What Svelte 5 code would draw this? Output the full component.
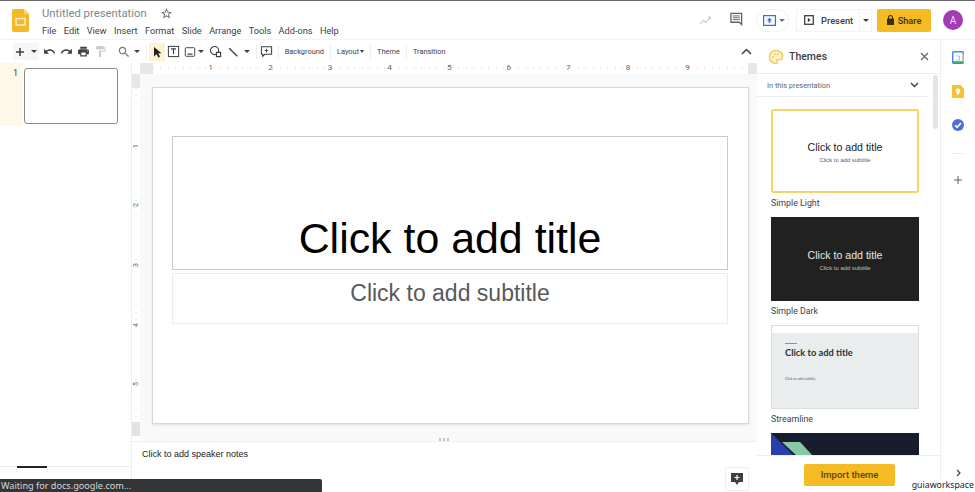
<script>
  const menus = ['File', 'Edit', 'View', 'Insert', 'Format', 'Slide', 'Arrange', 'Tools', 'Add-ons', 'Help'];
  const inches = [1, 2, 3, 4, 5, 6, 7, 8, 9];
  const sideInches = [1, 2, 3, 4, 5];
</script>

<div class="app">
  <header class="topbar">
    <svg class="logo" width="17" height="23" viewBox="0 0 17 23">
      <path d="M2 0h10l5 5v16a2 2 0 0 1-2 2H2a2 2 0 0 1-2-2V2a2 2 0 0 1 2-2z" fill="#f4b92a" />
      <path d="M12 0l5 5h-5z" fill="#f8d775" />
      <rect x="4" y="9.500" width="9" height="6.500" fill="none" stroke="#fff3c4" stroke-width="1.400" />
    </svg>
    <div class="doc">
      <div class="title-row">
        <span class="doc-title">Untitled presentation</span>
        <svg class="star" width="13" height="13" viewBox="0 0 24 24"><path d="M22 9.240l-7.190-.62L12 2 9.190 8.630 2 9.240l5.460 4.730L5.820 21 12 17.270 18.180 21l-1.630-7.030L22 9.240zM12 15.400l-3.760 2.270 1-4.280-3.320-2.880 4.380-.38L12 6.100l1.710 4.040 4.380.38-3.320 2.880 1 4.280L12 15.400z" fill="#5f6368" /></svg>
      </div>
      <nav class="menu">
        {#each menus as item}
          <span>{item}</span>
        {/each}
      </nav>
    </div>
    <div class="actions">
      <svg class="trend" width="13" height="11" viewBox="0 0 15 12"><path d="M1 10l4-4 3 2 5-6M10 2h3v3" fill="none" stroke="#c4c7c9" stroke-width="1.200" /></svg>
      <svg class="comments" width="13" height="14" viewBox="0 0 14 14"><path d="M1 1h11.500v12l-2.500-2.500H1z" fill="none" stroke="#5f6368" stroke-width="1.400" /><path d="M3 3.700h7.500M3 5.700h7.500M3 7.700h7.500" stroke="#5f6368" stroke-width="1" /></svg>
      <div class="meet">
        <svg width="13" height="11" viewBox="0 0 13 11"><rect x=".6" y=".6" width="11.800" height="9.800" fill="#f4f8ff" stroke="#3f72c5" stroke-width="1.200" /><path d="M6.500 2.800L9 5.500H7.400v2.300H5.600V5.500H4z" fill="#3f72c5" /></svg>
        <span class="caret blue"></span>
      </div>
      <div class="present">
        <span class="present-main">
          <svg width="10" height="10" viewBox="0 0 10 10"><rect x=".7" y=".7" width="8.600" height="8.600" fill="none" stroke="#3c4043" stroke-width="1.300" /><path d="M3.800 2.800L6.600 5 3.800 7.200z" fill="#3c4043" /></svg>
          Present
        </span>
        <span class="present-more"><span class="caret dark"></span></span>
      </div>
      <button class="share">
        <svg width="7" height="10" viewBox="0 0 7 10"><path d="M1 3.500V2.500a2.500 2.500 0 0 1 5 0v1h1V10H0V3.500zM2 3.500h3v-1a1.500 1.500 0 0 0-3 0z" fill="#3c3006" /></svg>
        Share
      </button>
      <div class="avatar">A</div>
    </div>
  </header>

  <div class="body">
    <div class="main">
      <div class="toolbar">
        <span class="new-group">
          <svg width="10" height="10" viewBox="0 0 10 10"><path d="M5 1v8M1 5h8" stroke="#3c4043" stroke-width="1.500" /></svg>
          <span class="caret dark"></span>
        </span>
        <svg class="ic" viewBox="0 0 24 24"><path d="M12.500 8c-2.650 0-5.050.99-6.900 2.600L2 7v9h9l-3.620-3.620c1.390-1.160 3.160-1.880 5.120-1.880 3.540 0 6.550 2.310 7.600 5.500l2.370-.78C21.080 11.030 17.150 8 12.500 8z" /></svg>
        <svg class="ic" viewBox="0 0 24 24"><path d="M18.400 10.600C16.550 8.990 14.150 8 11.500 8c-4.650 0-8.580 3.030-9.960 7.220L3.900 16c1.050-3.190 4.050-5.500 7.600-5.500 1.950 0 3.730.72 5.120 1.880L13 16h9V7l-3.600 3.600z" /></svg>
        <svg class="ic" viewBox="0 0 24 24"><path d="M19 8H5c-1.660 0-3 1.340-3 3v6h4v4h12v-4h4v-6c0-1.660-1.340-3-3-3zm-3 11H8v-5h8v5zm3-7c-.55 0-1-.45-1-1s.45-1 1-1 1 .45 1 1-.45 1-1 1zm-1-9H6v4h12V3z" /></svg>
        <svg class="ic faint" viewBox="0 0 24 24"><path d="M18 4V3c0-.55-.45-1-1-1H5c-.55 0-1 .45-1 1v4c0 .55.45 1 1 1h12c.55 0 1-.45 1-1V6h1v4H9v11c0 .55.45 1 1 1h2c.55 0 1-.45 1-1v-9h8V4h-3z" /></svg>
        <svg class="ic zoom" viewBox="0 0 24 24"><path d="M15.500 14h-.79l-.28-.27C15.410 12.590 16 11.110 16 9.500 16 5.910 13.090 3 9.500 3S3 5.910 3 9.500 5.910 16 9.500 16c1.610 0 3.090-.59 4.230-1.570l.27.28v.79l5 4.990L20.490 19l-4.990-5zm-6 0C7.010 14 5 11.990 5 9.500S7.010 5 9.500 5 14 7.010 14 9.500 11.990 14 9.500 14z" /></svg>
        <span class="caret dark zoom-caret"></span>
        <span class="sep"></span>
        <span class="cursor-btn">
          <svg width="12" height="12" viewBox="0 0 24 24"><path d="M6 2v19l5-5 3.500 7 3.500-1.700L14.500 14.500H21z" fill="#202124" /></svg>
        </span>
        <svg class="ic textbox" viewBox="0 0 14 14"><rect x="1.500" y="1.500" width="11" height="11" fill="none" stroke="#3c4043" stroke-width="1.100" /><path d="M4.300 4.200h5.400M7 4.200v5.800" fill="none" stroke="#3c4043" stroke-width="1.200" /></svg>
        <svg class="ic image" viewBox="0 0 14 14"><rect x="1.500" y="2" width="11" height="10" rx="1" fill="none" stroke="#3c4043" stroke-width="1.100" /><path d="M4 9.500h6" stroke="#3c4043" stroke-width="1.400" /></svg>
        <span class="caret dark image-caret"></span>
        <svg class="ic shape" viewBox="0 0 14 14"><circle cx="6" cy="6" r="4.400" fill="none" stroke="#3c4043" stroke-width="1.200" /><path d="M8 8h4.500v4.500H8z" fill="#fff" stroke="#3c4043" stroke-width="1.200" /></svg>
        <svg class="ic line" viewBox="0 0 14 14"><path d="M2.500 2.500l9.500 9.500" stroke="#3c4043" stroke-width="1.600" /></svg>
        <span class="caret dark line-caret"></span>
        <span class="sep"></span>
        <svg class="ic comment-add" viewBox="0 0 14 14"><path d="M1.500 2h11v8H5l-2 2.200V10H1.500z" fill="none" stroke="#3c4043" stroke-width="1.100" /><path d="M7 4v4M5 6h4" stroke="#3c4043" stroke-width="1" /></svg>
        <span class="sep wide"></span>
        <span class="tb-text">Background</span>
        <span class="sep wide"></span>
        <span class="tb-text">Layout<span class="caret dark small"></span></span>
        <span class="sep wide"></span>
        <span class="tb-text">Theme</span>
        <span class="sep wide"></span>
        <span class="tb-text">Transition</span>
        <svg class="collapse" width="11" height="7" viewBox="0 0 11 7"><path d="M1 6l4.500-4.500L10 6" fill="none" stroke="#3c4043" stroke-width="1.500" /></svg>
      </div>

      <div class="workspace">
        <aside class="film">
          <div class="film-row">
            <span class="slide-no">1</span>
            <div class="thumb"></div>
          </div>
          <div class="film-foot"><span class="foot-tab"></span></div>
        </aside>

        <div class="editor">
          <div class="h-ruler">
            <span class="corner"></span>
            <div class="h-track">
              {#each inches as n}
                <span>{n}</span>
              {/each}
            </div>
            <span class="h-end"></span>
          </div>
          <div class="canvas-row">
            <div class="v-ruler">
              <span class="v-top"></span>
              <div class="v-track">
                {#each sideInches as n}
                  <span><i>{n}</i></span>
                {/each}
              </div>
              <span class="v-bottom"></span>
            </div>
            <div class="canvas">
              <div class="slide">
                <div class="ph-title">Click to add title</div>
                <div class="ph-sub">Click to add subtitle</div>
              </div>
            </div>
          </div>
          <div class="notes">
            <span class="grip"></span>
            <p>Click to add speaker notes</p>
            <span class="explore">
              <svg width="12" height="12" viewBox="0 0 12 12"><path d="M0 0h12v9H8l-2 3-2-3H0z" fill="#3c4043" /><path d="M6 2v5M3.500 4.500h5" stroke="#fff" stroke-width="1.200" /></svg>
            </span>
          </div>
        </div>
      </div>
    </div>

    <aside class="themes">
      <div class="themes-head">
        <svg class="palette" width="16" height="16" viewBox="0 0 24 24"><path d="M12 2C6.500 2 2 6.500 2 12s4.500 10 10 10c1 0 1.800-.8 1.800-1.800 0-.5-.2-.9-.5-1.200-.3-.3-.5-.7-.5-1.200 0-1 .8-1.800 1.800-1.800H16.700c3 0 5.300-2.400 5.300-5.300C22 5.900 17.500 2 12 2z" fill="#fdf1c7" stroke="#f2c94c" stroke-width="2" /><circle cx="7" cy="12" r="1.500" fill="#f2c94c" /><circle cx="10" cy="7.500" r="1.500" fill="#f2c94c" /><circle cx="15" cy="7.500" r="1.500" fill="#f2c94c" /></svg>
        <span class="themes-title">Themes</span>
        <svg class="close" width="9" height="9" viewBox="0 0 9 9"><path d="M1 1l7 7M8 1L1 8" stroke="#5f6368" stroke-width="1.200" /></svg>
      </div>
      <div class="filter">
        <span>In this presentation</span>
        <svg width="9" height="6" viewBox="0 0 9 6"><path d="M1 1l3.500 3.500L8 1" fill="none" stroke="#3c4043" stroke-width="1.400" /></svg>
      </div>
      <span class="scroll"></span>
      <div class="theme-list">
        <div class="preview light selected">
          <b>Click to add title</b>
          <small>Click to add subtitle</small>
        </div>
        <div class="theme-name">Simple Light</div>
        <div class="preview dark-theme">
          <b>Click to add title</b>
          <small>Click to add subtitle</small>
        </div>
        <div class="theme-name">Simple Dark</div>
        <div class="preview streamline">
          <div class="stream-inner">
            <span class="dash"></span>
            <b>Click to add title</b>
            <small>Click to add subtitle</small>
          </div>
        </div>
        <div class="theme-name">Streamline</div>
        <div class="preview focus">
          <svg width="148" height="24" viewBox="0 0 148 24"><path d="M0 0l24 24H0z" fill="#2a3fae" /><path d="M11 9h18l14 15H27z" fill="#86c9a6" /></svg>
        </div>
      </div>
      <div class="themes-foot">
        <button class="import">Import theme</button>
      </div>
    </aside>

    <aside class="rail">
      <svg class="addon" width="12" height="13" viewBox="0 0 12 13"><rect x=".7" y=".7" width="10.600" height="11.600" rx="1" fill="#fff" stroke="#4285f4" stroke-width="1.400" /><path d="M.7 11h10.600" stroke="#34a853" stroke-width="1.600" /><path d="M11.300 3v8" stroke="#fbbc04" stroke-width="1.400" /><path d="M4.500 5h3v4h-3" fill="none" stroke="#8ab4f8" stroke-width=".8" /></svg>
      <svg class="addon keep" width="12" height="13" viewBox="0 0 12 13"><path d="M1 0h7.500L12 3.500V12a1 1 0 0 1-1 1H1a1 1 0 0 1-1-1V1a1 1 0 0 1 1-1z" fill="#fbc02d" /><circle cx="6" cy="6" r="2.400" fill="#fff" /><rect x="5" y="8" width="2" height="1.700" fill="#fff" /></svg>
      <svg class="addon tasks" width="12" height="12" viewBox="0 0 12 12"><circle cx="6" cy="6" r="6" fill="#4c6fd1" /><path d="M3 6.200l2.100 2.100L9 4" fill="none" stroke="#fff" stroke-width="1.500" /></svg>
      <span class="rail-sep"></span>
      <svg class="plus" width="8" height="8" viewBox="0 0 8 8"><path d="M4 0v8M0 4h8" stroke="#5f6368" stroke-width="1" /></svg>
      <svg class="expand" width="5" height="8" viewBox="0 0 5 8"><path d="M1 1l3 3-3 3" fill="none" stroke="#3c4043" stroke-width="1.200" /></svg>
    </aside>
  </div>

  <div class="status">Waiting for docs.google.com...</div>
  <div class="watermark">guiaworkspace</div>
</div>

<style>
  :global(body) {
    margin: 0;
    background: #fff;
  }

  .app {
    position: relative;
    width: 975px;
    height: 492px;
    overflow: hidden;
    display: flex;
    flex-direction: column;
    border-top: 1px solid #6a6a6a;
    box-sizing: border-box;
    font-family: Roboto, sans-serif;
    color: #3c4043;
    background: #fff;
  }

  .caret {
    display: inline-block;
    width: 0;
    height: 0;
    border-left: 3px solid transparent;
    border-right: 3px solid transparent;
    border-top: 3px solid #3c4043;
  }

  .caret.blue {
    border-top-color: #4a76c9;
  }

  .caret.small {
    border-left-width: 2.500px;
    border-right-width: 2.500px;
    margin-left: 1px;
    vertical-align: 1px;
  }

  /* top bar */
  .topbar {
    height: 38px;
    flex-shrink: 0;
    display: flex;
    align-items: flex-start;
  }

  .logo {
    margin: 8px 0 0 12px;
  }

  .doc {
    margin-left: 13px;
    padding-top: 5px;
  }

  .title-row {
    display: flex;
    align-items: center;
    height: 15px;
  }

  .doc-title {
    width: 118px;
    font-size: 11.300px;
    color: #80868b;
  }

  .menu {
    display: flex;
    gap: 7.400px;
    font-size: 9.200px;
    margin-top: 3px;
    line-height: 14px;
    color: #3c4043;
  }

  .actions {
    margin-left: auto;
    display: flex;
    align-items: center;
    height: 38px;
    padding-right: 12px;
  }

  .comments {
    margin-left: 18px;
    margin-top: -2px;
  }

  .meet {
    margin-left: 13px;
    width: 33px;
    height: 23px;
    border: 1px solid #f1f3f4;
    border-radius: 11px;
    display: flex;
    align-items: center;
    gap: 3px;
    padding-left: 6px;
    box-sizing: border-box;
  }

  .present {
    margin-left: 7px;
    height: 23px;
    width: 76px;
    display: flex;
    border: 1px solid #f1f3f4;
    box-sizing: border-box;
  }

  .present-main {
    flex: 1;
    display: flex;
    align-items: center;
    gap: 7px;
    padding-left: 7px;
    font-size: 9.300px;
    font-weight: 500;
  }

  .present-more {
    width: 11px;
    border-left: 1px solid #f1f3f4;
    display: flex;
    align-items: center;
    justify-content: center;
  }

  .share {
    margin-left: 5px;
    width: 54px;
    height: 23px;
    border: none;
    border-radius: 2px;
    background: #f5bb24;
    color: #3c3006;
    font: 500 9.200px Roboto, sans-serif;
    display: flex;
    align-items: center;
    justify-content: center;
    gap: 4px;
    padding: 0;
  }

  .avatar {
    margin-left: 12px;
    width: 20px;
    height: 20px;
    border-radius: 50%;
    background: #a33bb5;
    color: #f3d9f7;
    font-size: 10px;
    display: flex;
    align-items: center;
    justify-content: center;
  }

  .body {
    flex: 1;
    display: flex;
    min-height: 0;
    border-top: 1px solid #f1f3f4;
  }

  .main {
    width: 757px;
    display: flex;
    flex-direction: column;
    flex-shrink: 0;
  }

  /* toolbar */
  .toolbar {
    height: 23px;
    flex-shrink: 0;
    display: flex;
    align-items: center;
    padding-left: 13px;
  }

  .new-group {
    width: 26px;
    height: 17px;
    background: #f5f6f7;
    display: flex;
    align-items: center;
    gap: 6px;
    padding-left: 2px;
    box-sizing: border-box;
    margin-right: 3.500px;
    flex-shrink: 0;
  }

  .ic {
    width: 13px;
    height: 13px;
    margin-right: 4.300px;
    fill: #3c4043;
    flex-shrink: 0;
  }

  .ic.faint {
    fill: #c9cccf;
  }

  .ic.zoom {
    width: 14px;
    height: 14px;
    margin-left: 5px;
    margin-right: 3px;
    fill: #70757a;
  }

  .zoom-caret {
    margin-right: 1px;
  }

  .sep {
    width: 1px;
    height: 14px;
    background: #eceef0;
    margin: 0 5px;
    flex-shrink: 0;
  }

  .sep.wide {
    margin: 0 6px;
  }

  .cursor-btn {
    width: 16px;
    height: 18px;
    background: #fdf3d3;
    display: flex;
    align-items: center;
    justify-content: center;
    margin-left: -3px;
    margin-right: 2px;
  }

  .ic.textbox {
    margin-right: 3px;
  }

  .ic.image {
    width: 12px;
    height: 12px;
    margin-left: 1px;
    margin-right: 2px;
  }

  .image-caret {
    margin-right: 4px;
  }

  .ic.shape {
    margin-left: 1px;
    margin-right: 5px;
  }

  .ic.line {
    width: 12px;
    height: 12px;
    margin-right: 5px;
  }

  .line-caret {
    margin-right: 1px;
  }

  .ic.comment-add {
    margin: 0 -1px 0 -2px;
  }

  .tb-text {
    color: #3c4043;
    font-size: 7.400px;
    white-space: nowrap;
    opacity: 0.99;
  }

  .collapse {
    margin-left: auto;
    margin-right: 5px;
  }

  /* filmstrip + editor */
  .workspace {
    flex: 1;
    display: flex;
    min-height: 0;
  }

  .film {
    width: 132px;
    flex-shrink: 0;
    display: flex;
    flex-direction: column;
    border-right: 1px solid #eceef0;
    box-sizing: border-box;
  }

  .film-row {
    height: 63px;
    display: flex;
    padding-top: 5px;
    background: linear-gradient(90deg, #fdf8e8 0, #fdf8e8 22px, #fff 23px);
    box-sizing: border-box;
  }

  .slide-no {
    width: 24px;
    padding-left: 13px;
    box-sizing: border-box;
    font-size: 9px;
    color: #3c4043;
  }

  .thumb {
    width: 94px;
    height: 56px;
    border: 1px solid #8c8c84;
    border-radius: 3px;
    box-sizing: border-box;
    background: #fff;
  }

  .film-foot {
    margin-top: auto;
    height: 25px;
    border-top: 1px solid #eceef0;
  }

  .foot-tab {
    display: block;
    width: 30px;
    height: 2px;
    margin-left: 17px;
    margin-top: -1px;
    background: #202124;
  }

  .editor {
    flex: 1;
    display: flex;
    flex-direction: column;
    min-width: 0;
  }

  .h-ruler {
    height: 11px;
    display: flex;
    flex-shrink: 0;
    background: #fff;
  }

  .corner {
    width: 21px;
    background: linear-gradient(90deg, #fff 8px, #e6e7e8 8px);
  }

  .h-track {
    width: 595px;
    padding-left: 28px;
    box-sizing: border-box;
    display: flex;
    font-size: 8px;
    line-height: 10px;
    color: #5f6368;
    background: repeating-linear-gradient(90deg, #e6e7e9 0, #e6e7e9 1px, transparent 1px, transparent 7.450px) 0 4px / 100% 2px no-repeat;
  }

  .h-track span {
    width: 59.600px;
    text-align: center;
  }

  .h-end {
    flex: 1;
    background: #e6e7e8;
  }

  .canvas-row {
    flex: 1;
    display: flex;
    min-height: 0;
  }

  .v-ruler {
    width: 8px;
    display: flex;
    flex-direction: column;
    flex-shrink: 0;
    background: #fff;
  }

  .v-top {
    height: 14px;
    background: #e6e7e8;
  }

  .v-bottom {
    height: 14px;
    background: #e2e3e4;
    margin: auto 0 5px;
  }

  .v-track {
    height: 336px;
    padding-top: 28px;
    box-sizing: border-box;
    display: flex;
    flex-direction: column;
    font-size: 7px;
    color: #5f6368;
    background: repeating-linear-gradient(180deg, #e6e7e9 0, #e6e7e9 1px, transparent 1px, transparent 7.450px) 3px 0 / 2px 100% no-repeat;
  }

  .v-track span {
    height: 59.600px;
    flex-shrink: 0;
    display: flex;
    align-items: center;
    justify-content: center;
  }

  .v-track i {
    font-style: normal;
    transform: rotate(-90deg);
  }

  .canvas {
    flex: 1;
    background: #f8f9fa;
    padding: 13px 8px 0 12px;
    min-width: 0;
  }

  .slide {
    width: 597px;
    height: 337px;
    background: #fff;
    border: 1px solid #d5d7da;
    box-sizing: border-box;
    padding: 48px 20px 0 19px;
    font-family: "Liberation Sans", Arial, sans-serif;
    box-shadow: 0 1px 2px rgba(60, 64, 67, 0.15);
  }

  .ph-title {
    height: 134px;
    box-sizing: border-box;
    border: 1px solid #c8cacc;
    display: flex;
    align-items: flex-end;
    justify-content: center;
    font-size: 42.900px;
    line-height: 60px;
    color: #000;
    padding-bottom: 1px;
  }

  .ph-sub {
    height: 51px;
    margin-top: 3px;
    box-sizing: border-box;
    border: 1px solid #ececec;
    text-align: center;
    font-size: 23px;
    line-height: 39px;
    color: #595959;
  }

  .notes {
    height: 50px;
    flex-shrink: 0;
    border-top: 1px solid #eceef0;
    position: relative;
    background: #fff;
    font-family: "Liberation Sans", Arial, sans-serif;
  }

  .notes p {
    margin: 0;
    padding: 5px 0 0 10px;
    font-size: 9px;
    line-height: 14px;
    color: #202124;
  }

  .grip {
    position: absolute;
    left: 307px;
    top: -4px;
    width: 12px;
    height: 3px;
    background: repeating-linear-gradient(90deg, #c4c7c9 0, #c4c7c9 2px, transparent 2px, transparent 4px);
  }

  .explore {
    position: absolute;
    right: 8px;
    bottom: 1px;
    width: 24px;
    height: 24px;
    border: 1px solid #eceef0;
    border-radius: 2px;
    box-sizing: border-box;
    display: flex;
    align-items: center;
    justify-content: center;
  }

  /* themes panel */
  .themes {
    width: 184px;
    flex-shrink: 0;
    position: relative;
    display: flex;
    flex-direction: column;
    border-right: 1px solid #eceef0;
    box-sizing: border-box;
    min-height: 0;
  }

  .themes-head {
    height: 34px;
    flex-shrink: 0;
    display: flex;
    align-items: center;
    padding-left: 11px;
    border-bottom: 1px solid #eceef0;
    box-sizing: border-box;
  }

  .themes-title {
    margin-left: 5px;
    font-size: 10.500px;
    font-weight: 500;
    color: #3c4043;
  }

  .close {
    margin-left: auto;
    margin-right: 11px;
  }

  .filter {
    height: 23px;
    flex-shrink: 0;
    width: 172px;
    display: flex;
    align-items: center;
    justify-content: space-between;
    padding: 0 10px 0 10px;
    box-sizing: border-box;
    border-bottom: 1px solid #eceef0;
    font-size: 7.400px;
    color: #5f6368;
  }

  .filter span {
    opacity: 0.99;
  }

  .scroll {
    position: absolute;
    left: 176px;
    top: 35px;
    width: 5px;
    height: 54px;
    border-radius: 3px;
    background: #e4e5e7;
  }

  .theme-list {
    flex: 1;
    min-height: 0;
    overflow: hidden;
    padding: 12px 0 0 14px;
  }

  .preview {
    width: 148px;
    height: 84px;
    box-sizing: border-box;
    display: flex;
    flex-direction: column;
    align-items: center;
    justify-content: center;
    font-family: "Liberation Sans", Arial, sans-serif;
    overflow: hidden;
  }

  .preview b {
    font-weight: 400;
    font-size: 10.600px;
    line-height: 13px;
    margin-top: 3px;
  }

  .preview small {
    font-size: 5.900px;
    line-height: 7px;
    margin-top: 3px;
    opacity: 0.75;
  }

  .light {
    border: 1px solid #dadce0;
    color: #202124;
  }

  .light.selected {
    border: 2px solid #f5d469;
    border-radius: 2px;
  }

  .dark-theme {
    background: #212121;
    color: #e8e8e8;
  }

  .streamline {
    border: 1px solid #dadce0;
    padding-top: 7px;
    justify-content: flex-start;
    align-items: stretch;
  }

  .stream-inner {
    flex: 1;
    background: #e9eded;
    padding: 10px 0 0 13px;
    display: flex;
    flex-direction: column;
    align-items: flex-start;
    font-family: Lato, sans-serif;
    color: #2b2f33;
  }

  .dash {
    width: 12px;
    height: 1px;
    background: #8a8f94;
    margin-bottom: 2px;
  }

  .stream-inner b {
    font-weight: 700;
    font-size: 9.300px;
    margin-top: 0;
  }

  .stream-inner small {
    font-size: 3.500px;
    margin-top: 17px;
  }

  .focus {
    background: #171d2c;
    justify-content: flex-start;
    align-items: flex-start;
  }

  .focus svg {
    display: block;
  }

  .theme-name {
    height: 24px;
    line-height: 20px;
    font-size: 8.800px;
    color: #3c4043;
  }

  .themes-foot {
    height: 37px;
    flex-shrink: 0;
    border-top: 1px solid #eceef0;
    background: #fff;
    box-sizing: border-box;
    padding: 7px 0 0 47px;
  }

  .import {
    width: 91px;
    height: 22px;
    border: none;
    border-radius: 2px;
    background: #f5bb24;
    color: #5a4510;
    font: 500 9.500px Roboto, sans-serif;
    padding: 0;
  }

  /* add-on rail */
  .rail {
    flex: 1;
    display: flex;
    flex-direction: column;
    align-items: center;
  }

  .addon {
    margin-top: 11px;
  }

  .keep {
    margin-top: 21px;
  }

  .tasks {
    margin-top: 21px;
  }

  .rail-sep {
    width: 13px;
    height: 1px;
    background: #eceef0;
    margin-top: 22px;
  }

  .plus {
    margin-top: 22px;
  }

  .expand {
    margin-top: auto;
    margin-bottom: 15px;
  }

  /* things lying over the page */
  .status {
    position: absolute;
    left: 0;
    bottom: 0;
    width: 322px;
    height: 13px;
    background: #333537;
    border-top-right-radius: 2px;
    color: #d8d8d8;
    font: 9.150px/13px "Noto Sans", sans-serif;
    padding-left: 1px;
    box-sizing: border-box;
  }

  .watermark {
    position: absolute;
    right: 1px;
    bottom: 0;
    background: #fff;
    color: #222;
    font: 8.800px/13px "Noto Sans", sans-serif;
  }
</style>
